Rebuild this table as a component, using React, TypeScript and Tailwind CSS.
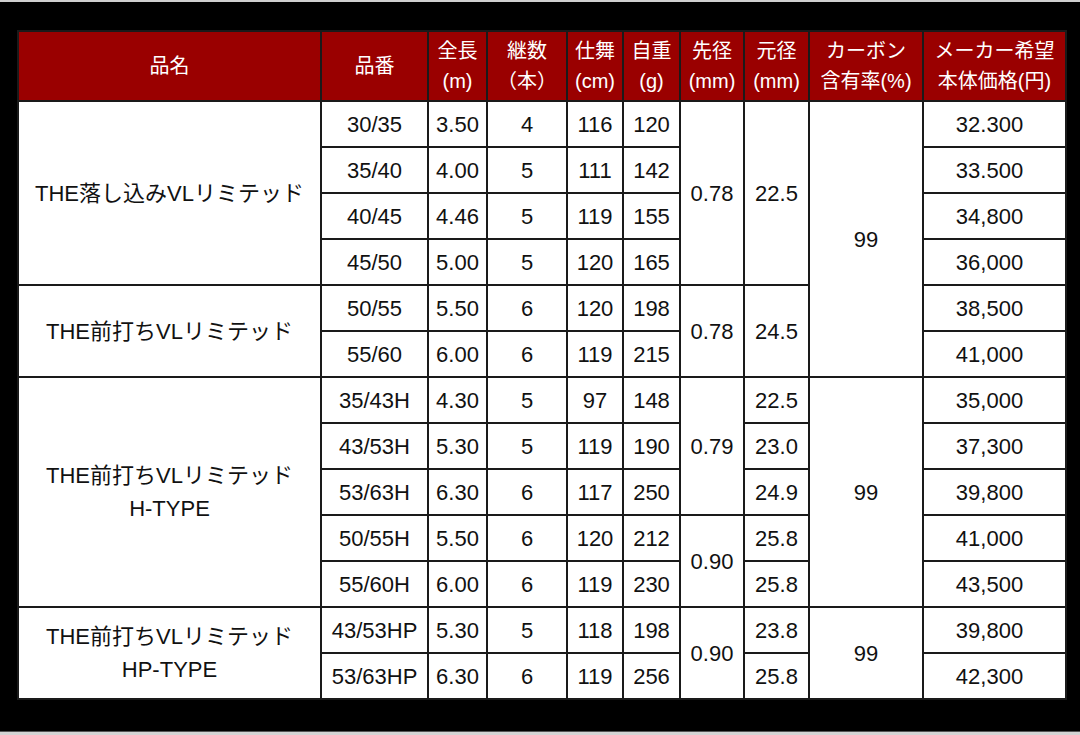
import React from 'react';

type Span = { v: string | string[]; span: number };

type Row = {
  name?: Span;
  model: string;
  length: string;
  pieces: string;
  closed: string;
  weight: string;
  tip?: Span;
  butt?: Span;
  carbon?: Span;
  price: string;
};

const rows: Row[] = [
  { name: { v: 'THE落し込みVLリミテッド', span: 4 }, model: '30/35', length: '3.50', pieces: '4', closed: '116', weight: '120', tip: { v: '0.78', span: 4 }, butt: { v: '22.5', span: 4 }, carbon: { v: '99', span: 6 }, price: '32.300' },
  { model: '35/40', length: '4.00', pieces: '5', closed: '111', weight: '142', price: '33.500' },
  { model: '40/45', length: '4.46', pieces: '5', closed: '119', weight: '155', price: '34,800' },
  { model: '45/50', length: '5.00', pieces: '5', closed: '120', weight: '165', price: '36,000' },
  { name: { v: 'THE前打ちVLリミテッド', span: 2 }, model: '50/55', length: '5.50', pieces: '6', closed: '120', weight: '198', tip: { v: '0.78', span: 2 }, butt: { v: '24.5', span: 2 }, price: '38,500' },
  { model: '55/60', length: '6.00', pieces: '6', closed: '119', weight: '215', price: '41,000' },
  { name: { v: ['THE前打ちVLリミテッド', 'H-TYPE'], span: 5 }, model: '35/43H', length: '4.30', pieces: '5', closed: '97', weight: '148', tip: { v: '0.79', span: 3 }, butt: { v: '22.5', span: 1 }, carbon: { v: '99', span: 5 }, price: '35,000' },
  { model: '43/53H', length: '5.30', pieces: '5', closed: '119', weight: '190', butt: { v: '23.0', span: 1 }, price: '37,300' },
  { model: '53/63H', length: '6.30', pieces: '6', closed: '117', weight: '250', butt: { v: '24.9', span: 1 }, price: '39,800' },
  { model: '50/55H', length: '5.50', pieces: '6', closed: '120', weight: '212', tip: { v: '0.90', span: 2 }, butt: { v: '25.8', span: 1 }, price: '41,000' },
  { model: '55/60H', length: '6.00', pieces: '6', closed: '119', weight: '230', butt: { v: '25.8', span: 1 }, price: '43,500' },
  { name: { v: ['THE前打ちVLリミテッド', 'HP-TYPE'], span: 2 }, model: '43/53HP', length: '5.30', pieces: '5', closed: '118', weight: '198', tip: { v: '0.90', span: 2 }, butt: { v: '23.8', span: 1 }, carbon: { v: '99', span: 2 }, price: '39,800' },
  { model: '53/63HP', length: '6.30', pieces: '6', closed: '119', weight: '256', butt: { v: '25.8', span: 1 }, price: '42,300' },
];

const cell = 'border-2 border-[#1a1a1a] text-center align-middle p-0';
const head = 'border-2 border-[#1a1a1a] text-center align-middle p-0 font-normal leading-[30px]';

function SpanCell({ s }: { s: Span }) {
  const lines = Array.isArray(s.v) ? s.v : [s.v];
  return (
    <td rowSpan={s.span} className={`${cell} leading-[33px]`}>
      {lines.map(l => (
        <div key={l}>{l}</div>
      ))}
    </td>
  );
}

export default function App() {
  return (
    <div className="w-[1080px] h-[735px] flex flex-col bg-black font-['Liberation_Sans','Noto_Sans_CJK_JP',sans-serif]">
      <div className="h-[2px] bg-[#cfcfcf]" />
      <div className="flex-1 pt-[28px] pl-[17px]">
        <table className="table-fixed border-collapse w-[1048px] bg-white text-[#111] text-[22px]">
          <colgroup>
            <col className="w-[303px]" />
            <col className="w-[107px]" />
            <col className="w-[59px]" />
            <col className="w-[80px]" />
            <col className="w-[56px]" />
            <col className="w-[57px]" />
            <col className="w-[64px]" />
            <col className="w-[65px]" />
            <col className="w-[114px]" />
            <col className="w-[143px]" />
          </colgroup>
          <thead>
            <tr className="h-[70px] bg-[#9a0000] text-white text-[20px]">
              <th className={head}>品名</th>
              <th className={head}>品番</th>
              <th className={head}>全長<br />(m)</th>
              <th className={head}>継数<br />（本）</th>
              <th className={head}>仕舞<br />(cm)</th>
              <th className={head}>自重<br />(g)</th>
              <th className={head}>先径<br />(mm)</th>
              <th className={head}>元径<br />(mm)</th>
              <th className={head}>カーボン<br />含有率(%)</th>
              <th className={head}>メーカー希望<br />本体価格(円)</th>
            </tr>
          </thead>
          <tbody>
            {rows.map(r => (
              <tr key={r.model} className="h-[46px]">
                {r.name && <SpanCell s={r.name} />}
                <td className={cell}>{r.model}</td>
                <td className={cell}>{r.length}</td>
                <td className={cell}>{r.pieces}</td>
                <td className={cell}>{r.closed}</td>
                <td className={cell}>{r.weight}</td>
                {r.tip && <SpanCell s={r.tip} />}
                {r.butt && <SpanCell s={r.butt} />}
                {r.carbon && <SpanCell s={r.carbon} />}
                <td className={`${cell} pr-[10px]`}>{r.price}</td>
              </tr>
            ))}
          </tbody>
        </table>
      </div>
      <div className="h-[4px] bg-[#d4d4d4] border-t border-[#555]" />
    </div>
  );
}
